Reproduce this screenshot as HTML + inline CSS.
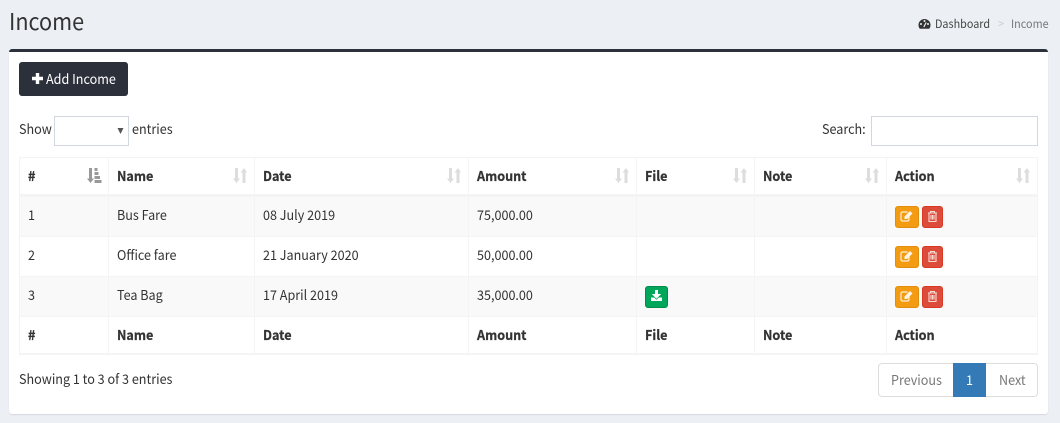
<!DOCTYPE html>
<html>
<head>
<meta charset="utf-8">
<style>
html,body{margin:0;padding:0}
body{width:1060px;height:423px;overflow:hidden;position:relative;background:#ecf0f5;font-family:"Noto Sans CJK SC","Liberation Sans",sans-serif;font-size:13.4px;color:#333}
.a{position:absolute;white-space:nowrap;line-height:20px;transform:scaleX(.94);transform-origin:0 50%;margin-top:-1px}
svg.a{transform:none;margin-top:0}
.b{font-weight:700;color:#333;-webkit-text-stroke:.25px #333}
.box{position:absolute;left:9px;top:49px;width:1039px;height:362px;background:#fff;border-top:3px solid #2c303b;border-radius:3px;box-shadow:0 1px 1px rgba(0,0,0,.1)}
.v{position:absolute;width:2px;background:#f4f4f4;top:157px;height:197px}
.h{position:absolute;left:19px;width:1019px;background:#f4f4f4}
.st{position:absolute;left:20px;width:1017px;background:#f9f9f9}
.btn{position:absolute;height:22px;border-radius:3px;box-sizing:border-box;border:1px solid}
.ed{width:24px;left:895px;background:#f39c12;border-color:#e08e0b}
.de{width:21px;left:922px;background:#dd4b39;border-color:#d73925}
.btn svg{position:absolute;left:0;top:0}
</style>
</head>
<body>
<div class="a" style="left:9px;top:5px;font-size:23px;line-height:32px;color:#333">Income</div>

<svg class="a" style="left:918px;top:18px" width="13" height="12" viewBox="0 0 13 12"><path d="M6.500 1A6 6 0 0 0 .5 7c0 1.500.5 2.800 1.300 3.800h9.400c.8-1 1.300-2.300 1.300-3.800a6 6 0 0 0-6-6z" fill="#333"/><circle cx="6.500" cy="3" r="1" fill="#ecf0f5"/><circle cx="3" cy="6" r="1" fill="#ecf0f5"/><circle cx="10" cy="6" r="1" fill="#ecf0f5"/><path d="M5.800 9L8.200 4.500" stroke="#ecf0f5" stroke-width="1.200"/></svg>
<div class="a" style="left:935px;top:15px;font-size:11.5px;color:#444">Dashboard</div>
<div class="a" style="left:998px;top:15px;font-size:11.5px;color:#ccc">&gt;</div>
<div class="a" style="left:1011px;top:15px;font-size:11.5px;color:#777">Income</div>

<div class="box"></div>

<div style="position:absolute;left:19px;top:62px;width:109px;height:34px;background:#2c303b;border-radius:3px"></div>
<svg class="a" style="left:32px;top:73px" width="11" height="11" viewBox="0 0 11 11"><path d="M3.800 0h3.400v3.800H11v3.400H7.200V11H3.800V7.200H0V3.800h3.800z" fill="#fff"/></svg>
<div class="a" style="left:46px;top:69px;color:#fff">Add Income</div>

<div class="a" style="left:19px;top:119px">Show</div>
<div style="position:absolute;left:54px;top:116px;width:75px;height:30px;box-sizing:border-box;border:1px solid #d2d6de;background:#fff"></div>
<svg class="a" style="left:117px;top:127px" width="7" height="7" viewBox="0 0 7 7"><path d="M.5 1h6L3.500 7z" fill="#555"/></svg>
<div class="a" style="left:132px;top:119px">entries</div>
<div class="a" style="left:822px;top:119px">Search:</div>
<div style="position:absolute;left:871px;top:116px;width:167px;height:30px;box-sizing:border-box;border:1px solid #d2d6de;background:#fff"></div>

<!-- stripes -->
<div class="st" style="top:197px;height:39px"></div>
<div class="st" style="top:277px;height:39px"></div>

<!-- lines -->
<div class="h" style="top:157px;height:1px"></div>
<div class="h" style="top:194px;height:3px"></div>
<div class="h" style="top:236px;height:1px"></div>
<div class="h" style="top:276px;height:1px"></div>
<div class="h" style="top:316px;height:1px"></div>
<div class="h" style="top:353px;height:2px"></div>
<div class="v" style="left:19px;width:1px"></div>
<div class="v" style="left:108px;width:1px"></div>
<div class="v" style="left:254px;width:1px"></div>
<div class="v" style="left:468px;width:1px"></div>
<div class="v" style="left:636px;width:1px"></div>
<div class="v" style="left:754px;width:1px"></div>
<div class="v" style="left:886px;width:1px"></div>
<div class="v" style="left:1037px;width:1px"></div>

<!-- header -->
<div class="a b" style="left:28px;top:166px">#</div>
<div class="a b" style="left:117px;top:166px">Name</div>
<div class="a b" style="left:263px;top:166px">Date</div>
<div class="a b" style="left:477px;top:166px">Amount</div>
<div class="a b" style="left:645px;top:166px">File</div>
<div class="a b" style="left:763px;top:166px">Note</div>
<div class="a b" style="left:895px;top:166px">Action</div>

<!-- sort icons -->
<svg class="a" style="left:87px;top:168px" width="15" height="15" viewBox="0 0 15 15"><path d="M2 0h3v10.500h2L3.500 15 0 10.500h2z" fill="#999"/><path d="M7.500 0h3v3h-3zM7.500 4h4v3h-4zM7.500 8h5.500v3H7.500zM7.500 12H14.500v3H7.500z" fill="#999"/></svg>
<svg class="a" style="left:233px;top:168px" width="14" height="15" viewBox="0 0 14 15"><path d="M2 0h3v10.500h2L3.500 15 0 10.500h2zM9.500 15h3V4.500h1.500L11 0 7.500 4.500h2z" fill="#ddd"/></svg>
<svg class="a" style="left:447px;top:168px" width="14" height="15" viewBox="0 0 14 15"><path d="M2 0h3v10.500h2L3.500 15 0 10.500h2zM9.500 15h3V4.500h1.500L11 0 7.500 4.500h2z" fill="#ddd"/></svg>
<svg class="a" style="left:615px;top:168px" width="14" height="15" viewBox="0 0 14 15"><path d="M2 0h3v10.500h2L3.500 15 0 10.500h2zM9.500 15h3V4.500h1.500L11 0 7.500 4.500h2z" fill="#ddd"/></svg>
<svg class="a" style="left:733px;top:168px" width="14" height="15" viewBox="0 0 14 15"><path d="M2 0h3v10.500h2L3.500 15 0 10.500h2zM9.500 15h3V4.500h1.500L11 0 7.500 4.500h2z" fill="#ddd"/></svg>
<svg class="a" style="left:865px;top:168px" width="14" height="15" viewBox="0 0 14 15"><path d="M2 0h3v10.500h2L3.500 15 0 10.500h2zM9.500 15h3V4.500h1.500L11 0 7.500 4.500h2z" fill="#ddd"/></svg>
<svg class="a" style="left:1016px;top:168px" width="14" height="15" viewBox="0 0 14 15"><path d="M2 0h3v10.500h2L3.500 15 0 10.500h2zM9.500 15h3V4.500h1.500L11 0 7.500 4.500h2z" fill="#ddd"/></svg>

<!-- rows -->
<div class="a" style="left:28px;top:205px">1</div>
<div class="a" style="left:117px;top:205px">Bus Fare</div>
<div class="a" style="left:263px;top:205px">08 July 2019</div>
<div class="a" style="left:477px;top:205px">75,000.00</div>

<div class="a" style="left:28px;top:245px">2</div>
<div class="a" style="left:117px;top:245px">Office fare</div>
<div class="a" style="left:263px;top:245px">21 January 2020</div>
<div class="a" style="left:477px;top:245px">50,000.00</div>

<div class="a" style="left:28px;top:285px">3</div>
<div class="a" style="left:117px;top:285px">Tea Bag</div>
<div class="a" style="left:263px;top:285px">17 April 2019</div>
<div class="a" style="left:477px;top:285px">35,000.00</div>

<!-- download -->
<div class="btn" style="left:645px;top:286px;width:23px;background:#00a65a;border-color:#008d4c">
<svg width="21" height="20" viewBox="0 0 21 20"><path d="M9 3h3v4h3.200l-4.700 4.700L5.800 7H9zM5 10.500h3.200l2.300 2.300 2.300-2.300H16V14H5z" fill="#fff"/></svg></div>

<!-- action buttons -->
<div class="btn ed" style="top:206px"><svg width="22" height="20" viewBox="0 0 22 20"><path d="M13 9.500v3a1.500 1.500 0 0 1-1.500 1.500h-5A1.500 1.500 0 0 1 5 12.500v-6A1.500 1.500 0 0 1 6.500 5h5" fill="none" stroke="#fff" stroke-width="1.200" opacity=".85"/><path d="M8.500 9.500L14 4l2.500 2.500L11 12H8.500z" fill="#fff" opacity=".9"/></svg></div>
<div class="btn de" style="top:206px"><svg width="19" height="20" viewBox="0 0 19 20"><path d="M5 6h9M7.500 6V4.500h4V6M6 6v8.500h7V6M8 8v4.500M9.500 8v4.500M11 8v4.500" fill="none" stroke="#fff" stroke-width="1.100" opacity=".8"/></svg></div>
<div class="btn ed" style="top:246px"><svg width="22" height="20" viewBox="0 0 22 20"><path d="M13 9.500v3a1.500 1.500 0 0 1-1.500 1.500h-5A1.500 1.500 0 0 1 5 12.500v-6A1.500 1.500 0 0 1 6.500 5h5" fill="none" stroke="#fff" stroke-width="1.200" opacity=".85"/><path d="M8.500 9.500L14 4l2.500 2.500L11 12H8.500z" fill="#fff" opacity=".9"/></svg></div>
<div class="btn de" style="top:246px"><svg width="19" height="20" viewBox="0 0 19 20"><path d="M5 6h9M7.500 6V4.500h4V6M6 6v8.500h7V6M8 8v4.500M9.500 8v4.500M11 8v4.500" fill="none" stroke="#fff" stroke-width="1.100" opacity=".8"/></svg></div>
<div class="btn ed" style="top:286px"><svg width="22" height="20" viewBox="0 0 22 20"><path d="M13 9.500v3a1.500 1.500 0 0 1-1.500 1.500h-5A1.500 1.500 0 0 1 5 12.500v-6A1.500 1.500 0 0 1 6.500 5h5" fill="none" stroke="#fff" stroke-width="1.200" opacity=".85"/><path d="M8.500 9.500L14 4l2.500 2.500L11 12H8.500z" fill="#fff" opacity=".9"/></svg></div>
<div class="btn de" style="top:286px"><svg width="19" height="20" viewBox="0 0 19 20"><path d="M5 6h9M7.500 6V4.500h4V6M6 6v8.500h7V6M8 8v4.500M9.500 8v4.500M11 8v4.500" fill="none" stroke="#fff" stroke-width="1.100" opacity=".8"/></svg></div>

<!-- footer -->
<div class="a b" style="left:28px;top:325px">#</div>
<div class="a b" style="left:117px;top:325px">Name</div>
<div class="a b" style="left:263px;top:325px">Date</div>
<div class="a b" style="left:477px;top:325px">Amount</div>
<div class="a b" style="left:645px;top:325px">File</div>
<div class="a b" style="left:763px;top:325px">Note</div>
<div class="a b" style="left:895px;top:325px">Action</div>

<div class="a" style="left:19px;top:369px">Showing 1 to 3 of 3 entries</div>

<!-- pagination -->
<div style="position:absolute;left:878px;top:363px;width:160px;height:34px;box-sizing:border-box;border:1px solid #ddd;border-radius:4px;background:#fff"></div>
<div style="position:absolute;left:953px;top:363px;width:33px;height:34px;background:#337ab7"></div>
<div class="a" style="left:891px;top:370px;color:#777">Previous</div>
<div class="a" style="left:966px;top:370px;color:#fff">1</div>
<div class="a" style="left:999px;top:370px;color:#777">Next</div>
</body>
</html>
